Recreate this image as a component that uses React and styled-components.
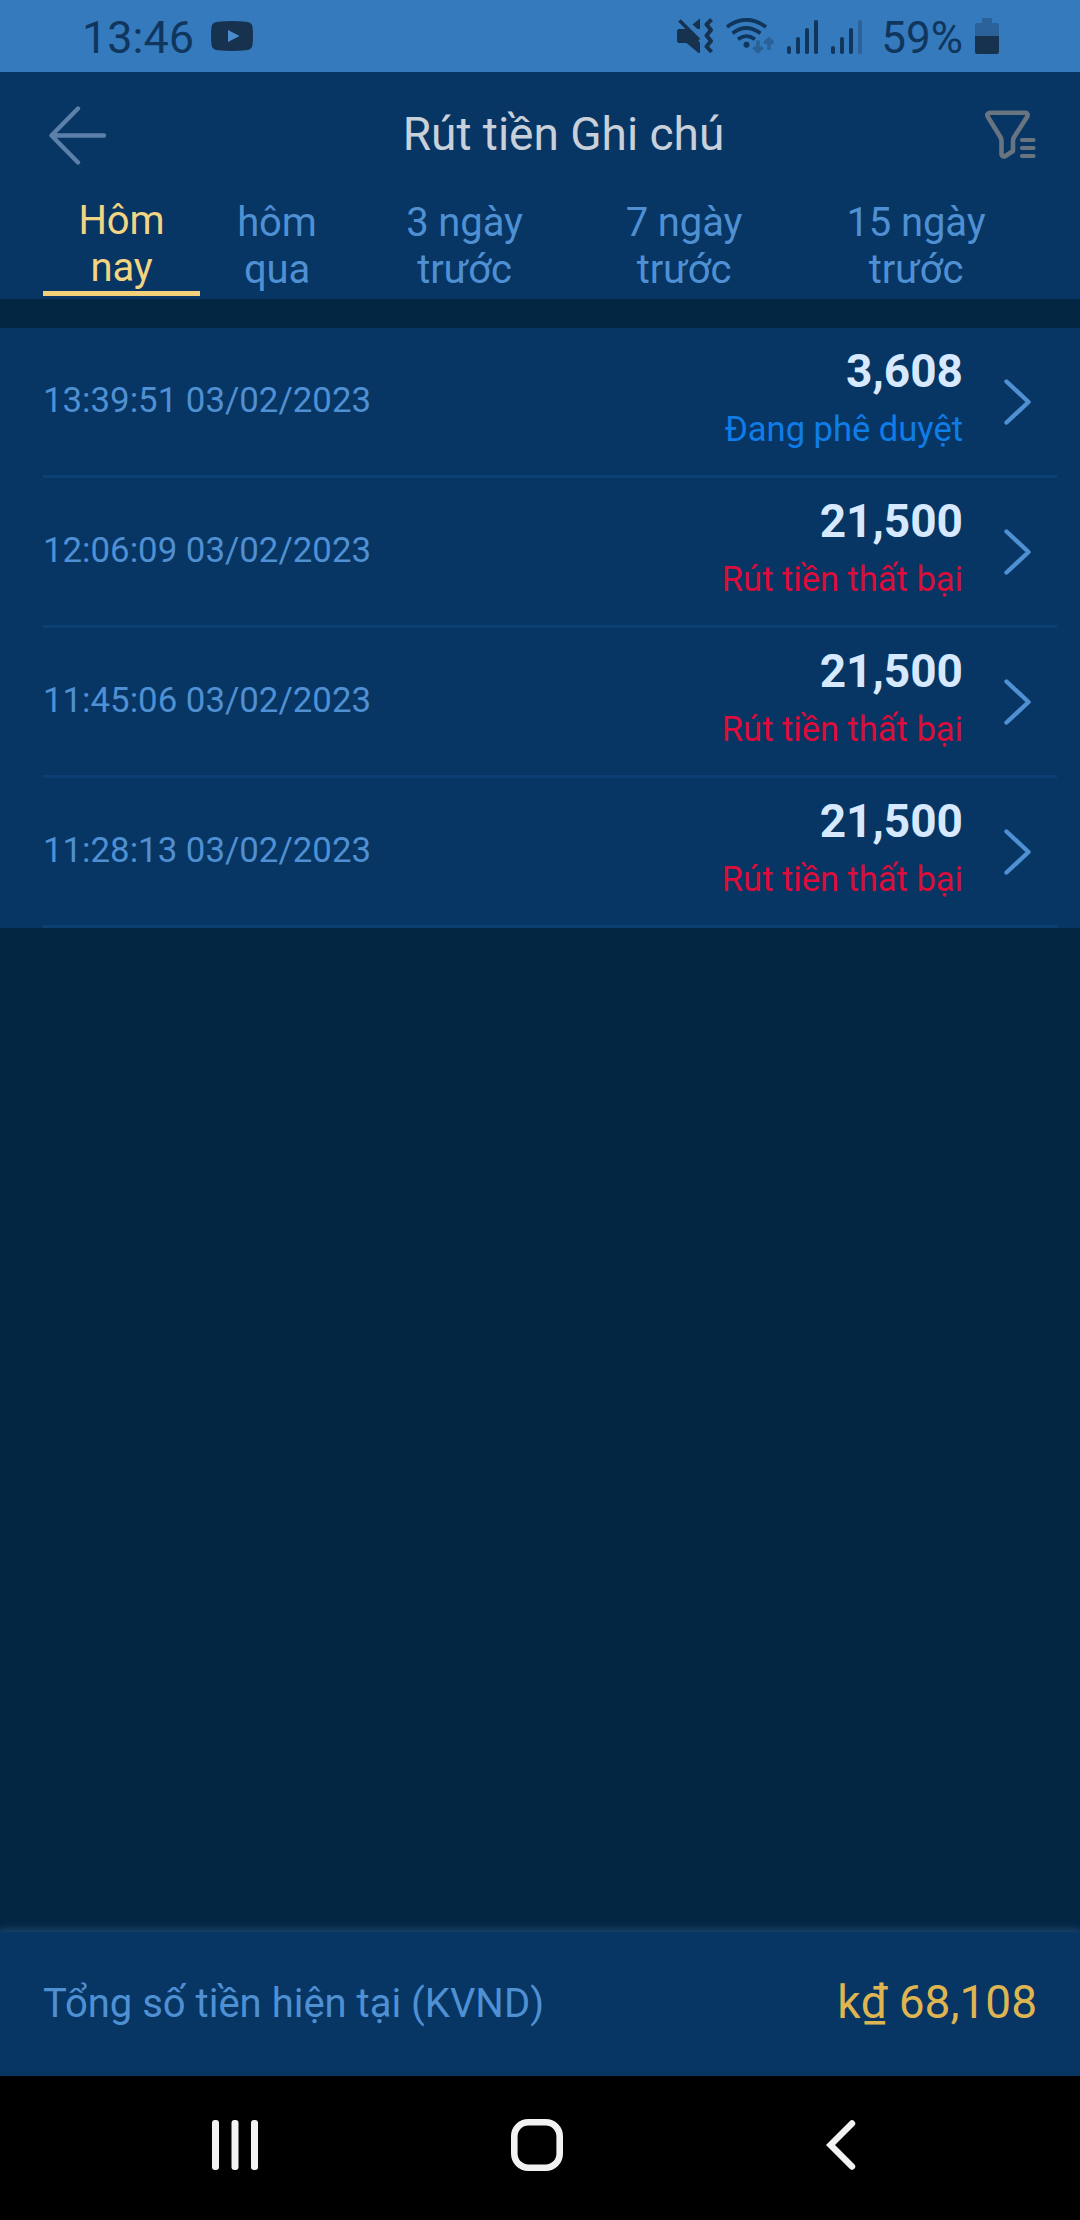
import styled, { createGlobalStyle } from 'styled-components';

const GlobalStyle = createGlobalStyle`
    * {
        box-sizing: border-box;
    }

    body {
        margin: 0;
        background: #032643;
        font-family: Roboto, 'Liberation Sans', sans-serif;
    }
`;

const Screen = styled.div`
    display: flex;
    flex-direction: column;
    width: 1080px;
    height: 2220px;
    background: #032643;
`;

const StatusBar = styled.div`
    display: flex;
    align-items: center;
    justify-content: space-between;
    height: 72px;
    padding: 0 81px 0 82px;
    background: #357abd;
    color: #10365d;
    font-size: 45px;
    line-height: 72px;
`;

const StatusGroup = styled.div`
    display: flex;
    align-items: center;
    height: 72px;
    gap: ${props => props.$gap};

    svg {
        display: block;
    }

    span {
        padding-top: 3px;
    }
`;

const Percent = styled.span`
    margin: 0 -1px 0 6px;
    font-size: 44px;
`;

const Header = styled.header`
    display: grid;
    grid-template-columns: 200px 1fr 156px;
    align-items: center;
    height: 125px;
    padding: 0 43px 0 46px;
    background: #073564;

    svg {
        display: block;
    }

    svg:last-child {
        justify-self: end;
    }
`;

const Title = styled.h1`
    margin: 0;
    padding-bottom: 2px;
    color: #c8d0da;
    font-size: 46px;
    font-weight: 400;
    line-height: 54px;
    text-align: center;
`;

const Tabs = styled.nav`
    display: flex;
    height: 102px;
    padding-left: 43px;
    background: #073564;
`;

const Tab = styled.div`
    width: ${props => props.$width}px;
    height: 99px;
    padding-top: ${props => (props.$active ? 0 : 2)}px;
    border-bottom: ${props => (props.$active ? '5px solid #f2d17a' : 'none')};
    color: ${props => (props.$active ? '#f2d582' : '#4f90d3')};
    font-size: 40px;
    letter-spacing: -0.1px;
    line-height: 47px;
    text-align: center;
    white-space: pre-line;
`;

const List = styled.div`
    flex: 1;
    padding-top: 29px;
`;

const Row = styled.div`
    height: 150px;
    padding: 0 23px 0 43px;
    background: #073564;
`;

const RowBody = styled.div`
    display: flex;
    align-items: center;
    height: 150px;
    padding-right: 26px;
    border-bottom: 3px solid #0c3f74;
`;

const Time = styled.div`
    flex: 1;
    padding-bottom: 3px;
    color: #4f90d3;
    font-size: 34.8px;
    line-height: 42px;
`;

const Money = styled.div`
    display: flex;
    flex-direction: column;
    gap: 4px;
    margin-right: 40px;
    padding-bottom: 3px;
    text-align: right;
    line-height: 54px;
`;

const Amount = styled.div`
    color: #d6e9ff;
    font-size: 46px;
    font-weight: 700;
`;

const State = styled.div`
    color: ${props => (props.$failed ? '#dc0d3a' : '#0f7de8')};
    font-size: 34.5px;
`;

const Footer = styled.footer`
    display: flex;
    align-items: center;
    justify-content: space-between;
    height: 144px;
    padding: 0 43px 2px;
    background: #073564;
    box-shadow: 0 0 9px 1px #285482;
    clip-path: inset(-20px 0 0 0);
`;

const TotalLabel = styled.span`
    color: #4f90d3;
    font-size: 40px;
`;

const Total = styled.span`
    padding-bottom: 2px;
    color: #deb550;
    font-size: 46px;
`;

const NavBar = styled.div`
    display: grid;
    grid-template-columns: 470px 134px 1fr;
    align-items: center;
    height: 144px;
    padding-bottom: 6px;
    background: #000;

    svg {
        display: block;
        justify-self: center;
    }

    svg:last-child {
        margin-right: 3px;
    }
`;

const tabs = [
    { label: 'Hôm\nnay', width: 157 },
    { label: 'hôm\nqua', width: 154 },
    { label: '3 ngày\ntrước', width: 221 },
    { label: '7 ngày\ntrước', width: 218 },
    { label: '15 ngày\ntrước', width: 246 },
];

const records = [
    { time: '13:39:51 03/02/2023', amount: '3,608', state: 'Đang phê duyệt' },
    { time: '12:06:09 03/02/2023', amount: '21,500', state: 'Rút tiền thất bại', failed: true },
    { time: '11:45:06 03/02/2023', amount: '21,500', state: 'Rút tiền thất bại', failed: true },
    { time: '11:28:13 03/02/2023', amount: '21,500', state: 'Rút tiền thất bại', failed: true },
];

const YoutubeIcon = () => (
    <svg width="42" height="30" viewBox="0 0 42 30">
        <path fill="#17324f" d="M7 .8Q21-.6 35 .8Q41 1.300 41.500 6Q42.500 15 41.500 24Q41 28.700 35 29.200Q21 30.600 7 29.200Q1 28.700.5 24Q-.5 15 .5 6Q1 1.300 7 .8Z" />
        <path fill="#4a8ccd" d="M17 9v12l11.500-6z" />
    </svg>
)

const MuteIcon = () => (
    <svg width="36" height="36" viewBox="0 0 36 36" fill="#17324f">
        <path d="M2 11h7.500L23 24.500V35h-1.500L9.500 25H2Q0 25 0 23V13Q0 11 2 11Z" />
        <path d="M23 .5V11L20.500 11L15.500 6.500Z" />
        <path d="M2.500 2.500L22 22" stroke="#17324f" strokeWidth="3.600" />
        <path d="M34.500 1.500L29.500 6.500L34 12L29.500 17.500L34 23L29.500 28.500L34.500 34" fill="none" stroke="#17324f" strokeWidth="4" strokeLinejoin="round" />
    </svg>
)

const WifiIcon = () => (
    <svg width="48" height="36" viewBox="0 0 48 36" fill="none" stroke="#10365d" strokeWidth="3.700">
        <path d="M1 9Q20-5.500 40 9M6.500 15.200Q20 4.800 34.500 15.200M12 21.200Q20 15 29 21.200" />
        <circle cx="20.500" cy="26.800" r="3" fill="#10365d" stroke="none" />
        <path d="M32 22.500V33M27.500 29L32 33.500L36.500 29M43 32V21.500M38.500 25.500L43 21L47.500 25.500" stroke="#286299" />
    </svg>
)

const SignalIcon = ({ lastColor }) => (
    <svg width="31" height="36" viewBox="0 0 31 36" fill="#10365d">
        <rect x="0" y="28" width="4" height="8" rx="1.800" />
        <rect x="9" y="19" width="4" height="17" rx="1.800" />
        <rect x="18" y="10" width="4" height="26" rx="1.800" />
        <rect x="27" y="2" width="4" height="34" rx="1.800" fill={lastColor} />
    </svg>
)

const BatteryIcon = () => (
    <svg width="24" height="36" viewBox="0 0 24 36">
        <path fill="#2b6299" d="M7 0h10v5h5q2 0 2 2v11H0V7q0-2 2-2h5z" />
        <path fill="#17324f" d="M0 18h24v16q0 2-2 2H2q-2 0-2-2z" />
    </svg>
)

const BackIcon = () => (
    <svg width="64" height="60" viewBox="0 0 64 60" fill="none" stroke="#5b80a9" strokeWidth="4.400" strokeLinecap="round" strokeLinejoin="round">
        <path d="M32 3.500L5.500 30.500L32 57.500M6 30.500H58" />
    </svg>
)

const FilterIcon = () => (
    <svg width="52" height="50" viewBox="0 0 52 50" fill="none" stroke="#687580" strokeWidth="4.600" strokeLinecap="round" strokeLinejoin="round">
        <path d="M5 2.700H40.500Q43.500 3.200 42.300 6.500L29.500 26.500Q28 28.500 28 31V41L20 46.200Q16.500 47.200 16.500 44V31Q16.500 28.500 15 26.500L3 7Q1 3.500 5 2.700Z" />
        <path strokeWidth="4.200" d="M37 30H48.500M37 38H48.500M37 46H48.500" />
    </svg>
)

const ArrowIcon = () => (
    <svg width="28" height="48" viewBox="0 0 28 48" fill="none" stroke="#4f90d3" strokeWidth="4.400" strokeLinecap="round" strokeLinejoin="round">
        <path d="M3.500 3.500L25.500 24L3.500 44.500" />
    </svg>
)

const App = () => {
    return (
        <Screen>
            <GlobalStyle />
            <StatusBar>
                <StatusGroup $gap="17px">
                    <span>13:46</span>
                    <YoutubeIcon />
                </StatusGroup>
                <StatusGroup $gap="13px">
                    <MuteIcon />
                    <WifiIcon />
                    <SignalIcon lastColor="#10365d" />
                    <SignalIcon lastColor="#2b6299" />
                    <Percent>59%</Percent>
                    <BatteryIcon />
                </StatusGroup>
            </StatusBar>
            <Header>
                <BackIcon />
                <Title>Rút tiền Ghi chú</Title>
                <FilterIcon />
            </Header>
            <Tabs>
                {tabs.map((tab, i) => (
                    <Tab key={tab.label} $width={tab.width} $active={i === 0}>{tab.label}</Tab>
                ))}
            </Tabs>
            <List>
                {records.map(record => (
                    <Row key={record.time}>
                        <RowBody>
                            <Time>{record.time}</Time>
                            <Money>
                                <Amount>{record.amount}</Amount>
                                <State $failed={record.failed}>{record.state}</State>
                            </Money>
                            <ArrowIcon />
                        </RowBody>
                    </Row>
                ))}
            </List>
            <Footer>
                <TotalLabel>Tổng số tiền hiện tại (KVND)</TotalLabel>
                <Total>k₫ 68,108</Total>
            </Footer>
            <NavBar>
                <svg width="46" height="50" viewBox="0 0 46 50" fill="#f2f2f2">
                    <rect x="0" y="0" width="7" height="50" rx="3" />
                    <rect x="19.500" y="0" width="7" height="50" rx="3" />
                    <rect x="39" y="0" width="7" height="50" rx="3" />
                </svg>
                <svg width="52" height="52" viewBox="0 0 52 52" fill="none" stroke="#f2f2f2" strokeWidth="6.600">
                    <rect x="3.300" y="3.300" width="45.400" height="45.400" rx="14" />
                </svg>
                <svg width="30" height="50" viewBox="0 0 30 50" fill="none" stroke="#f2f2f2" strokeWidth="6.400" strokeLinecap="round">
                    <path d="M26 3.500L4.500 25L26 46.500" />
                </svg>
            </NavBar>
        </Screen>
    )
}

export default App
